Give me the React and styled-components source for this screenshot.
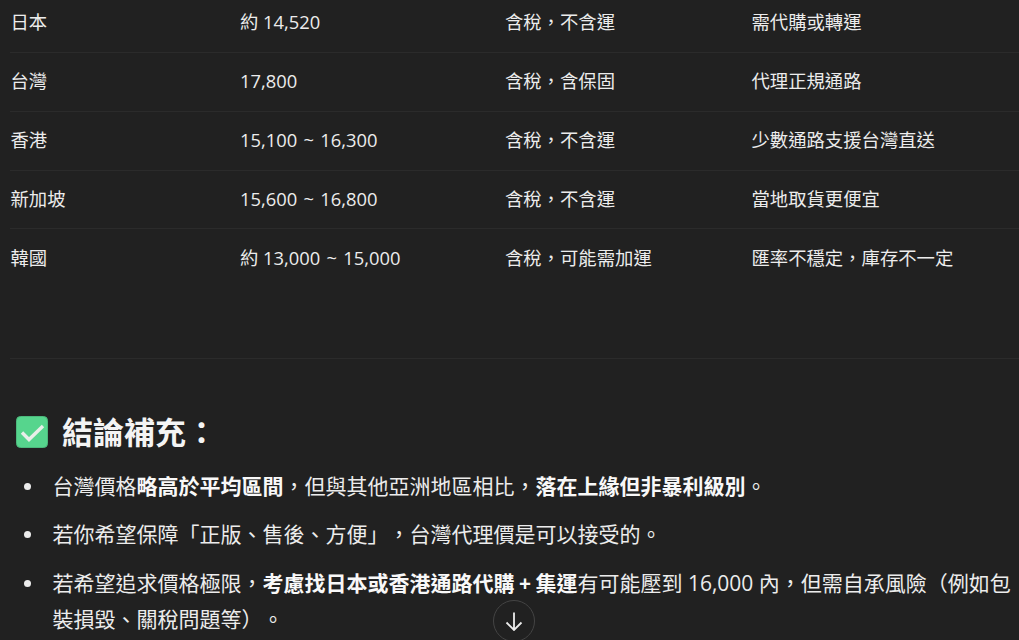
import React from 'react';
import styled, { createGlobalStyle } from 'styled-components';

const Global = createGlobalStyle`
  html, body { margin: 0; padding: 0; background: #212121; }
  body {
    font-family: "Open Sans", "Noto Sans CJK TC", sans-serif;
    color: #ececec;
    text-spacing-trim: space-all;
    text-autospace: no-autospace;
  }
`;

const Viewport = styled.main`
  position: relative;
  width: 1019px;
  height: 640px;
  overflow: hidden;
  background: #212121;
`;

const Content = styled.div`
  margin-top: -5.8px;
  padding-left: 10px;
  width: 1005px;
  font-size: 21px;
  line-height: 36.4px;
`;

const Table = styled.div`
  font-size: 18.35px;
  line-height: 28px;
`;

const Row = styled.div`
  display: grid;
  grid-template-columns: 229.5px 265px 246.5px 1fr;
  width: 1009px;
  height: 58.8px;
  box-sizing: border-box;
  padding: 14.2px 0 0 0.5px;
  border-bottom: 1px solid ${p => (p.$last ? 'transparent' : '#2b2b2b')};
`;

const Cell = styled.span`
  white-space: nowrap;
`;

const Tilde = styled.span`
  margin: 0 1.5px;
`;

const Divider = styled.hr`
  margin: 69.8px 0 0;
  width: 1009px;
  border: 0;
  border-top: 1px solid #2b2b2b;
`;

const Heading = styled.h3`
  display: flex;
  align-items: center;
  gap: 14px;
  margin: 49px 0 0 6px;
  font-size: 31px;
  line-height: 48px;
  font-weight: 700;
  color: #f4f4f4;
`;

const Check = styled.svg`
  width: 32px;
  height: 32px;
  flex: none;
`;

const List = styled.ul`
  list-style: none;
  margin: 12px 0 0;
  padding: 0;
`;

const Item = styled.li`
  position: relative;
  padding-left: 42.5px;
  margin-bottom: 12px;
  width: 962px;
  &::before {
    content: "";
    position: absolute;
    left: 13.5px;
    top: 15px;
    width: 7px;
    height: 7px;
    border-radius: 50%;
    background: #ececec;
  }
`;

const Strong = styled.strong`
  font-weight: 700;
  color: #f8f8f8;
  word-spacing: -1px;
`;

const ScrollButton = styled.button`
  position: absolute;
  left: 493px;
  top: 600px;
  width: 42px;
  height: 42px;
  padding: 0;
  display: flex;
  align-items: center;
  justify-content: center;
  border-radius: 50%;
  border: 1px solid #444;
  background: #212121;
  color: #ececec;
`;

const rows = [
  ['日本', '約 14,520', '含稅，不含運', '需代購或轉運'],
  ['台灣', '17,800', '含稅，含保固', '代理正規通路'],
  ['香港', '15,100 ~ 16,300', '含稅，不含運', '少數通路支援台灣直送'],
  ['新加坡', '15,600 ~ 16,800', '含稅，不含運', '當地取貨更便宜'],
  ['韓國', '約 13,000 ~ 15,000', '含稅，可能需加運', '匯率不穩定，庫存不一定'],
];

const renderCell = text => {
  const parts = text.split(' ~ ');
  if (parts.length === 1) return text;
  return <>{parts[0]} <Tilde>~</Tilde> {parts[1]}</>;
};

export default function App() {
  return (
    <Viewport lang="zh-TW">
      <Global />
      <Content>
        <Table>
          {rows.map((r, i) => (
            <Row key={r[0]} $last={i === rows.length - 1}>
              {r.map(c => <Cell key={c}>{renderCell(c)}</Cell>)}
            </Row>
          ))}
        </Table>
        <Divider />
        <Heading>
          <Check viewBox="0 0 32 32" aria-hidden="true">
            <rect x="0.5" y="0.5" width="31" height="31" rx="4" fill="#56d58d" stroke="#4cb97c" />
            <path d="M6 16.5 L13 23.5 L27 10" fill="none" stroke="#e8eee9" strokeWidth="3.4" />
          </Check>
          <span>結論補充：</span>
        </Heading>
        <List>
          <Item>台灣價格<Strong>略高於平均區間</Strong>，但與其他亞洲地區相比，<Strong>落在上緣但非暴利級別</Strong>。</Item>
          <Item>若你希望保障「正版、售後、方便」，台灣代理價是可以接受的。</Item>
          <Item>若希望追求價格極限，<Strong>考慮找日本或香港通路代購 + 集運</Strong>有可能壓到 16,000 內，但需自承風險（例如包裝損毀、關稅問題等）。</Item>
        </List>
      </Content>
      <ScrollButton aria-label="scroll down">
        <svg width="20" height="20" viewBox="0 0 20 20" fill="none" stroke="currentColor" strokeWidth="1.8">
          <path d="M10 1.5 V19 M2.5 11.5 L10 19 L17.5 11.5" />
        </svg>
      </ScrollButton>
    </Viewport>
  );
}
